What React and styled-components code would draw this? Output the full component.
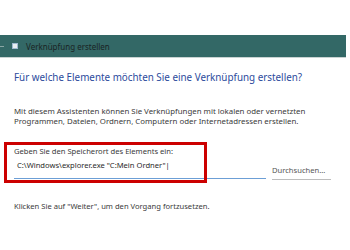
import React from 'react';
import styled, { createGlobalStyle } from 'styled-components';

const Global = createGlobalStyle`
  html, body {
    margin: 0;
    padding: 0;
    background: #fff;
  }
  body {
    font-family: 'Noto Sans', 'Open Sans', sans-serif;
    width: 350px;
    height: 250px;
    overflow: hidden;
  }
`;

const Page = styled.div`
  position: relative;
  width: 350px;
  height: 250px;
  padding-top: 35px;
  box-sizing: border-box;
`;

const TitleBar = styled.div`
  width: 346px;
  height: 23px;
  background: #336866;
  border-bottom: 1px solid #c9d3d2;
  display: flex;
  align-items: center;
  box-sizing: border-box;
  font-size: 8px;
  color: #1a2424;
`;

const Back = styled.span`
  width: 4px;
  height: 1px;
  background: #8aa6a4;
  margin-right: 8px;
`;

const AppIcon = styled.span`
  width: 4px;
  height: 4px;
  background: #e8eef2;
  border: 1px solid #9fb9d0;
  margin-right: 8px;
`;

const Content = styled.div`
  padding: 0 14px;
`;

const Heading = styled.h1`
  margin: 12px 0 0;
  font-size: 9.85px;
  font-weight: 400;
  color: #2b4a9c;
  line-height: 14px;
  white-space: nowrap;
`;

const Text = styled.p`
  margin: ${p => p.top || 0}px 0 0;
  font-size: ${p => p.size || 7.6}px;
  line-height: 10px;
  color: #3a3a3a;
  white-space: nowrap;
`;

const FieldRow = styled.div`
  display: flex;
  align-items: flex-end;
  margin-top: 2px;
`;

const InputLine = styled.div`
  width: 249px;
  padding: 0 0 6px 3px;
  border-bottom: 1px solid #6c9fd6;
  font-size: 7.6px;
  line-height: 14px;
  color: #2a2a2a;
  white-space: nowrap;
`;

const Browse = styled.div`
  margin: 0 0 -1px 6px;
  width: 59px;
  padding-bottom: 2px;
  border-bottom: 1px solid #bdbdbd;
  font-size: 7.6px;
  line-height: 14px;
  color: #555;
`;

const Highlight = styled.div`
  position: absolute;
  left: 4px;
  top: 142px;
  width: 203px;
  height: 41px;
  border: 3px solid #cc0000;
  box-sizing: border-box;
`;

export default function App() {
  return (
    <>
      <Global />
      <Page>
        <TitleBar>
          <Back />
          <AppIcon />
          Verknüpfung erstellen
        </TitleBar>
        <Content>
          <Heading>Für welche Elemente möchten Sie eine Verknüpfung erstellen?</Heading>
          <Text top={22} size={7.85}>
            Mit diesem Assistenten können Sie Verknüpfungen mit lokalen oder vernetzten<br />
            Programmen, Dateien, Ordnern, Computern oder Internetadressen erstellen.
          </Text>
          <Text top={20}>Geben Sie den Speicherort des Elements ein:</Text>
          <FieldRow>
            <InputLine>C:\Windows\explorer.exe "C:Mein Ordner"|</InputLine>
            <Browse>Durchsuchen...</Browse>
          </FieldRow>
          <Text top={22}>Klicken Sie auf "Weiter", um den Vorgang fortzusetzen.</Text>
        </Content>
        <Highlight />
      </Page>
    </>
  );
}
